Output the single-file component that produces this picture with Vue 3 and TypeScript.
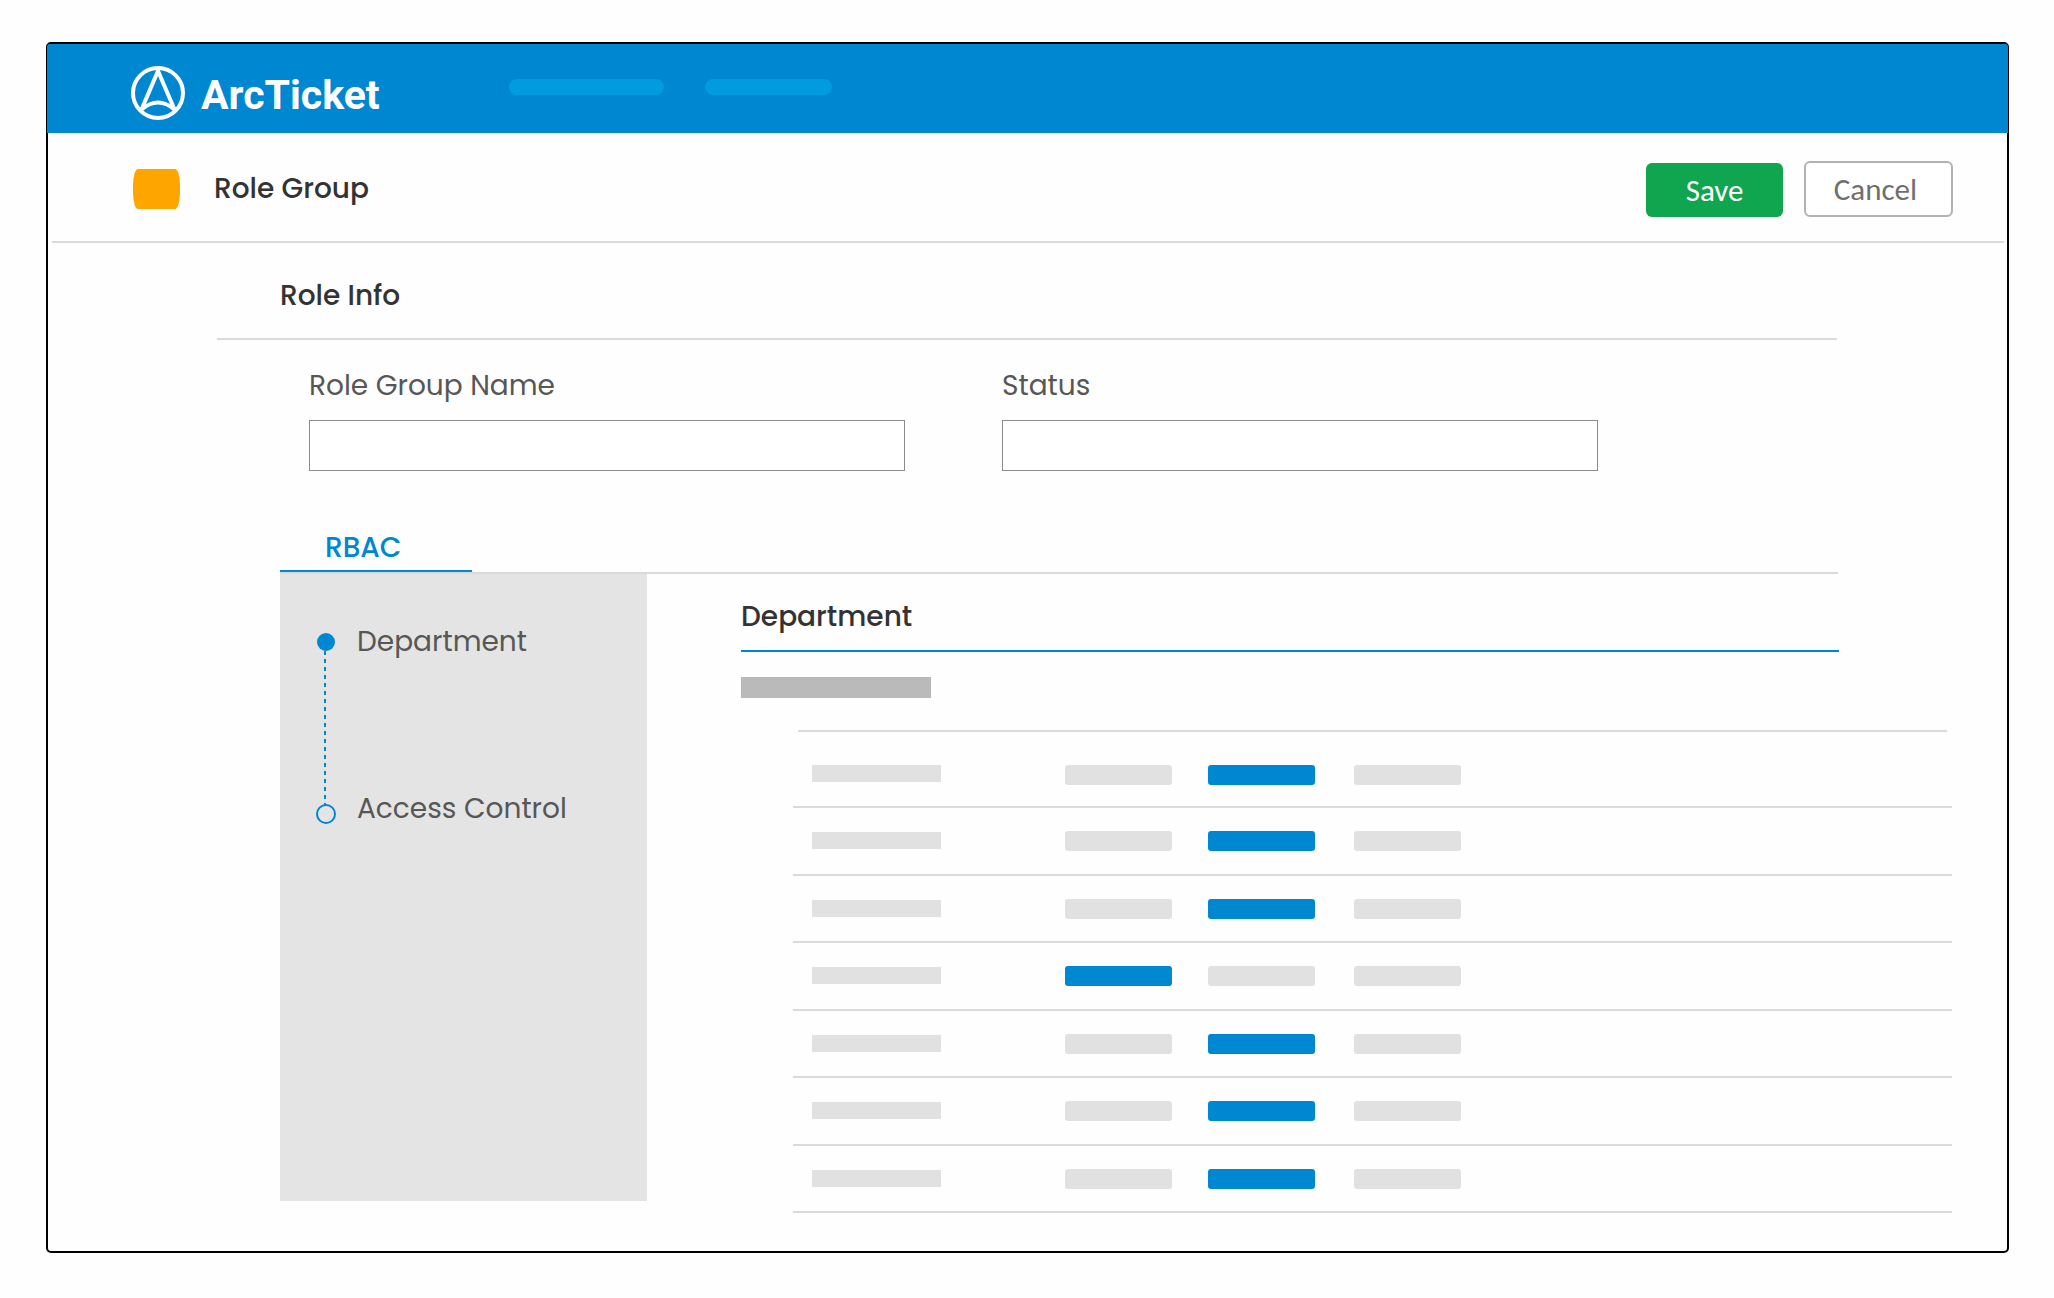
<script setup lang="ts">
import { ref } from 'vue'

const roleGroupName = ref('')
const status = ref('')

const steps = [
  { id: 'department', label: 'Department' },
  { id: 'access-control', label: 'Access Control' },
]

// Index of the highlighted level in each permission row
const permissions: number[] = [1, 1, 1, 0, 1, 1, 1]
const levels = [0, 1, 2]
</script>

<template>
  <div class="window">
    <header class="topbar">
      <a class="brand" href="#">
        <svg class="brand-mark" viewBox="0 0 54 54" aria-hidden="true">
          <circle cx="27" cy="27" r="25" />
          <path d="M10.5 43.5 L27 5 L43.5 43.5" />
          <path d="M10.5 43.5 Q27 29.5 43.5 43.5" />
        </svg>
        <span class="brand-name">ArcTicket</span>
      </a>
      <nav class="nav" aria-label="Main">
        <span class="nav-item nav-item-long"></span>
        <span class="nav-item"></span>
      </nav>
    </header>

    <div class="toolbar">
      <span class="swatch"></span>
      <h1 class="page-title">Role Group</h1>
      <div class="actions">
        <button class="btn btn-save" type="button">Save</button>
        <button class="btn btn-cancel" type="button">Cancel</button>
      </div>
    </div>

    <main>
      <h2 class="section-title">Role Info</h2>

      <form class="fields" @submit.prevent>
        <div class="field">
          <label for="role-group-name">Role Group Name</label>
          <input id="role-group-name" v-model="roleGroupName" type="text" />
        </div>
        <div class="field">
          <label for="status">Status</label>
          <input id="status" v-model="status" type="text" />
        </div>
      </form>

      <div class="tabs">
        <button class="tab" type="button">RBAC</button>
      </div>

      <div class="panel">
        <aside class="sidebar">
          <svg class="rail" viewBox="0 0 20 192" aria-hidden="true">
            <line x1="9" y1="19" x2="9" y2="173" />
            <circle class="dot-filled" cx="10" cy="10" r="9" />
            <circle class="dot-open" cx="10" cy="182" r="9" />
          </svg>
          <nav class="steps" aria-label="Steps">
            <a v-for="step in steps" :key="step.id" :href="'#' + step.id">{{ step.label }}</a>
          </nav>
        </aside>

        <section class="content">
          <h3 class="content-title">Department</h3>
          <div class="group-name"></div>
          <table class="permissions" aria-label="Department permissions">
            <colgroup>
              <col class="col-name" />
              <col class="col-first" />
              <col class="col-second" />
              <col />
            </colgroup>
            <tbody>
              <tr v-for="(selected, row) in permissions" :key="row">
                <td class="cell-name"><div class="name"></div></td>
                <td v-for="level in levels" :key="level">
                  <div class="level" :class="{ selected: level === selected }"></div>
                </td>
              </tr>
            </tbody>
          </table>
        </section>
      </div>
    </main>
  </div>
</template>

<style>
body {
  background: #fefefe;
}
</style>

<style scoped>
* {
  box-sizing: border-box;
}

.window {
  margin: 42px 45px 44px 46px;
  border: 2px solid #000;
  border-radius: 5px;
  font-family: Poppins, Inter, sans-serif;
  font-size: 28px;
  line-height: 38px;
  color: #575756;
}

h1,
h2,
h3 {
  margin: 0;
  font-size: 28px;
  font-weight: 500;
  color: #333;
}

.topbar {
  display: flex;
  align-items: flex-start;
  height: 89px;
  margin: 0 -1px;
  padding-left: 84px;
  border-radius: 3px 3px 0 0;
  background: #0087d2;
}

.brand {
  display: flex;
  gap: 16px;
  width: 378px;
  margin-top: 22px;
  color: #fff;
  text-decoration: none;
}

.brand-mark {
  width: 54px;
  height: 54px;
  fill: none;
  stroke: #fff;
  stroke-width: 4;
}

.brand-name {
  font-family: Roboto, sans-serif;
  font-size: 41px;
  font-weight: 700;
  line-height: 59px;
}

.nav {
  display: flex;
  gap: 41px;
  margin-top: 35px;
}

.nav-item {
  width: 127px;
  height: 16px;
  border-radius: 8px;
  background: #009cdf;
}

.nav-item-long {
  width: 155px;
}

.toolbar {
  display: flex;
  align-items: center;
  height: 110px;
  margin: 0 3px 0 4px;
  padding: 3px 51px 0 81px;
  border-bottom: 2px solid #dadada;
}

.swatch {
  width: 47px;
  height: 40px;
  margin-right: 34px;
  border-radius: 5px / 16px;
  background: #ffa500;
}

.actions {
  display: flex;
  align-items: flex-end;
  gap: 21px;
  margin-left: auto;
}

.btn {
  height: 56px;
  padding: 0;
  border-radius: 6px;
  font-family: Calibri, Carlito, Lato, sans-serif;
  font-size: 31px;
}

.btn-save {
  width: 137px;
  height: 54px;
  border: 0;
  background: #10a64f;
  color: #fff;
}

.btn-cancel {
  width: 149px;
  padding-right: 6px;
  border: 2px solid #b2b2b2;
  background: #fff;
  color: #706f6f;
}

.section-title {
  margin: 0 170px 0 169px;
  padding: 34px 0 23px 63px;
  border-bottom: 2px solid #dadada;
}

.fields {
  display: grid;
  grid-template-columns: 1fr 1fr;
  gap: 97px;
  margin: 27px 409px 58px 261px;
}

.field {
  display: flex;
  flex-direction: column;
  gap: 15px;
}

.field input {
  width: 100%;
  height: 51px;
  padding: 0 16px;
  border: 1px solid #8c8c8c;
  background: #fff;
  font: inherit;
  color: inherit;
}

.tabs {
  margin: 0 169px 0 232px;
  border-bottom: 2px solid #dadada;
}

.tab {
  display: block;
  width: 192px;
  padding: 0 0 3px 45px;
  border: 0;
  border-bottom: 2px solid #0087d2;
  background: none;
  font: inherit;
  font-weight: 500;
  text-align: left;
  color: #0087d2;
}

.panel {
  display: flex;
  margin: 0 55px 38px 232px;
}

.sidebar {
  display: flex;
  gap: 21px;
  flex: 0 0 367px;
  margin-bottom: 12px;
  padding: 49px 0 0 36px;
  background: #e4e4e4;
}

.rail {
  width: 20px;
  height: 192px;
  margin-top: 9px;
  fill: none;
  stroke: #0087d2;
  stroke-width: 2;
}

.rail line {
  stroke-dasharray: 4 4;
}

.rail .dot-filled {
  fill: #0087d2;
  stroke: none;
}

.steps {
  display: flex;
  flex-direction: column;
  gap: 129px;
}

.steps a {
  color: inherit;
  text-decoration: none;
}

.content {
  flex: 1;
  margin-left: 94px;
}

.content-title {
  margin-right: 113px;
  padding: 24px 0 14px;
  border-bottom: 2px solid #0087d2;
}

.group-name {
  width: 190px;
  height: 21px;
  margin: 25px 0 32px;
  background: #bababa;
}

.permissions {
  width: calc(100% - 52px);
  margin-left: 52px;
  border-spacing: 0;
  table-layout: fixed;
  background: linear-gradient(#dadada, #dadada) center top / calc(100% - 10px) 2px no-repeat;
}

.col-name {
  width: 272px;
}

.col-first {
  width: 143px;
}

.col-second {
  width: 146px;
}

.permissions td {
  height: 68px;
  padding: 23px 0 0;
  border-bottom: 2px solid #dadada;
  vertical-align: top;
}

.permissions tr:nth-child(2n + 3) td {
  height: 67px;
}

.permissions .cell-name {
  padding: 24px 0 0 19px;
}

.permissions tr:first-child td {
  height: 78px;
  padding-top: 35px;
}

.name {
  width: 129px;
  height: 17px;
  background: #e1e1e1;
}

.level {
  width: 107px;
  height: 20px;
  border-radius: 3px;
  background: #e1e1e1;
}

.level.selected {
  background: #0087d2;
}
</style>
